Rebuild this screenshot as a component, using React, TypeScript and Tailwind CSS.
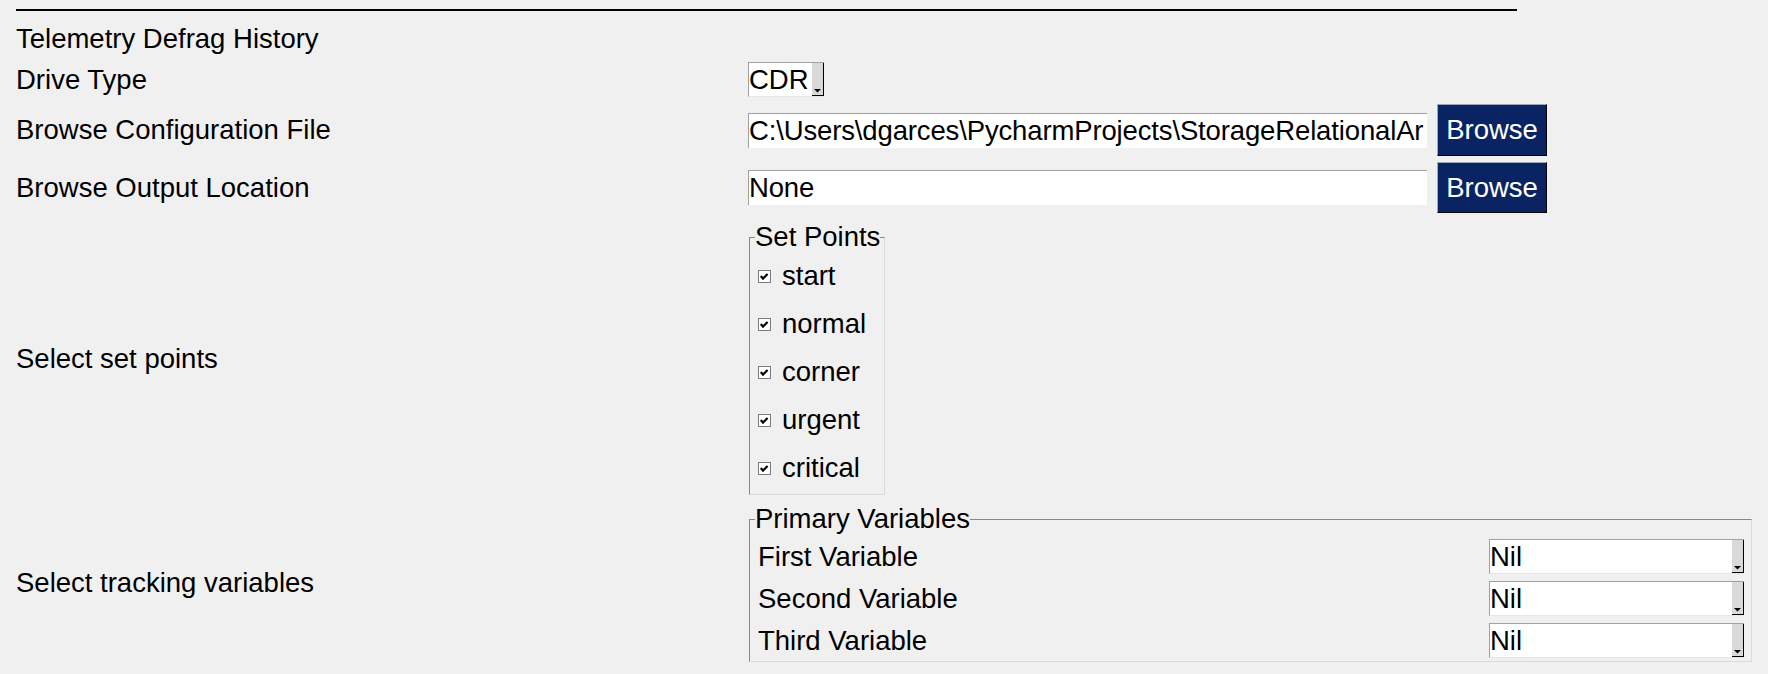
import type { ReactNode } from "react";

const setPoints = ["start", "normal", "corner", "urgent", "critical"];
const variables = ["First Variable", "Second Variable", "Third Variable"];

function Arrow() {
    return (
        <svg width="7" height="4" viewBox="0 0 7 4" className="block">
            <polygon points="0,0 7,0 3.5,3.5" fill="#000" />
        </svg>
    );
}

function Combo({ value, width }: { value: string; width: string }) {
    return (
        <div className={`flex h-[35px] ${width} border-t border-l border-b border-t-[#a0a0a0] border-l-[#a0a0a0] border-b-[#e6e6e6] bg-white`}>
            <div className="flex-1 overflow-hidden whitespace-nowrap flex items-center">{value}</div>
            <div className="w-[12px] bg-[#d9d9d9] border-r border-b border-black flex items-end justify-center pb-[2px]">
                <Arrow />
            </div>
        </div>
    );
}

function Entry({ value }: { value: string }) {
    return (
        <div className="h-[35px] w-[679px] bg-white border-t border-l border-[#a0a0a0] overflow-hidden whitespace-nowrap flex items-center tracking-[-0.14px]">
            {value}
        </div>
    );
}

function BrowseButton({ height }: { height: string }) {
    return (
        <button className={`${height} w-[110px] ml-[10px] bg-[#0a2463] text-white border border-t-[#9aa6c0] border-l-[#9aa6c0] border-r-black border-b-black flex items-center justify-center`}>
            Browse
        </button>
    );
}

function Row({ label, className, children }: { label: string; className: string; children: ReactNode }) {
    return (
        <div className={`grid grid-cols-[732px_auto] items-center ${className}`}>
            <div>{label}</div>
            <div className="flex items-center">{children}</div>
        </div>
    );
}

function CheckBox() {
    return (
        <svg width="13" height="13" viewBox="0 0 13 13" className="block shrink-0">
            <rect x="0.5" y="0.5" width="12" height="12" fill="#fff" stroke="#7a7a7a" />
            <path d="M2.8 6 L5 8.6 L9.6 4" fill="none" stroke="#000" strokeWidth="2.2" />
        </svg>
    );
}

export default function App() {
    return (
        <div className="min-h-screen w-full bg-[#f0f0f0] pl-4 pt-[9px] text-[27.5px] leading-[30px] text-black font-['Liberation_Sans',Arial,sans-serif]">
            {/* separator */}
            <div className="h-[2px] w-[1501px] bg-black" />

            <div className="mt-[13px]">Telemetry Defrag History</div>

            <Row label="Drive Type" className="mt-[8px] h-[35px]">
                <Combo value="CDR" width="w-[76px]" />
            </Row>

            <Row label="Browse Configuration File" className="mt-[7px] h-[52px]">
                <Entry value="C:\Users\dgarces\PycharmProjects\StorageRelationalAr" />
                <BrowseButton height="h-[52px]" />
            </Row>

            <Row label="Browse Output Location" className="mt-[6px] h-[51px]">
                <Entry value="None" />
                <BrowseButton height="h-[51px]" />
            </Row>

            <Row label="Select set points" className="mt-[9px]">
                <fieldset className="ml-[1px] w-[136px] border border-t-[#888888] border-l-[#888888] border-r-[#dadada] border-b-[#dadada] pb-[2px]">
                    <legend className="ml-[5px] px-0">Set Points</legend>
                    <div className="flex flex-col pl-[8px]">
                        {setPoints.map((p) => (
                            <label key={p} className="h-12 flex items-center">
                                <CheckBox />
                                <span className="ml-[11px]">{p}</span>
                            </label>
                        ))}
                    </div>
                </fieldset>
            </Row>

            <Row label="Select tracking variables" className="mt-[9px]">
                <fieldset className="ml-[1px] w-[1003px] border border-t-[#888888] border-l-[#888888] border-r-[#dadada] border-b-[#dadada] pt-[5px] pb-[3px]">
                    <legend className="ml-[5px] px-0">Primary Variables</legend>
                    <div className="flex flex-col gap-[7px] pl-[8px] pr-[7px]">
                        {variables.map((v) => (
                            <div key={v} className="flex h-[35px] items-center justify-between">
                                <span>{v}</span>
                                <Combo value="Nil" width="w-[255px]" />
                            </div>
                        ))}
                    </div>
                </fieldset>
            </Row>
        </div>
    );
}
